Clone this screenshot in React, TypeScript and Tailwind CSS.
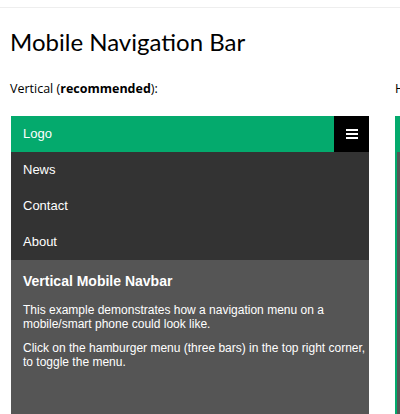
import { useState } from "react";

const links = ["News", "Contact", "About"];

function Phone({ open, onToggle }: { open: boolean; onToggle: () => void }) {
  return (
    <div className="w-[358px] h-[300px] bg-[#555555] font-['Liberation_Sans',Arial,sans-serif] text-white">
      <div className="flex h-[36px] items-center justify-between bg-[#04aa6d]">
        <span className="pl-[12px] text-[13px]">Logo</span>
        <button
          onClick={onToggle}
          className="flex h-full w-[35px] items-center justify-center bg-black"
        >
          <svg width="12" height="10" viewBox="0 0 12 10">
            <rect x="0" y="0" width="12" height="2" fill="white" />
            <rect x="0" y="4" width="12" height="2" fill="white" />
            <rect x="0" y="8" width="12" height="2" fill="white" />
          </svg>
        </button>
      </div>
      {open && (
        <div className="bg-[#333333]">
          {links.map((l) => (
            <div key={l} className="flex h-[36px] items-center pl-[12px] text-[13px]">
              {l}
            </div>
          ))}
        </div>
      )}
      <div className="pl-[12px] pr-[2px] pt-[12px]">
        <h3 className="text-[14px] leading-[18px] font-bold">Vertical Mobile Navbar</h3>
        <p className="mt-[13px] pr-[20px] text-[12px] leading-[14px]">
          This example demonstrates how a navigation menu on a mobile/smart phone could look like.
        </p>
        <p className="mt-[10px] text-[12px] leading-[14px]">
          Click on the hamburger menu (three bars) in the top right corner, to toggle the menu.
        </p>
      </div>
    </div>
  );
}

export default function App() {
  const [open, setOpen] = useState(true);
  return (
    <div className="h-[414px] w-[400px] overflow-hidden bg-white font-['Open_Sans',sans-serif] text-black">
      <div className="h-[8px] border-b border-[#eeeeee]" />
      <div className="px-[10px]">
        <h1 className="mt-[18px] font-['Lato',sans-serif] text-[24px] leading-[32px]">
          Mobile Navigation Bar
        </h1>
        <div className="mt-[22px] flex gap-[26px]">
          <div className="flex shrink-0 flex-col">
            <p className="whitespace-nowrap text-[12.5px] leading-[18px]">
              Vertical (<b>recommended</b>):
            </p>
            <div className="mt-[18px] pl-[1px]">
              <Phone open={open} onToggle={() => setOpen(!open)} />
            </div>
          </div>
          <div className="flex shrink-0 flex-col">
            <p className="whitespace-nowrap text-[12.5px] leading-[18px]">Horizontal:</p>
            <div className="mt-[18px] h-[300px] w-[300px] border-l-2 border-[#04aa6d] bg-[#555555]">
              <div className="h-[36px] bg-[#04aa6d]" />
            </div>
          </div>
        </div>
      </div>
    </div>
  );
}
